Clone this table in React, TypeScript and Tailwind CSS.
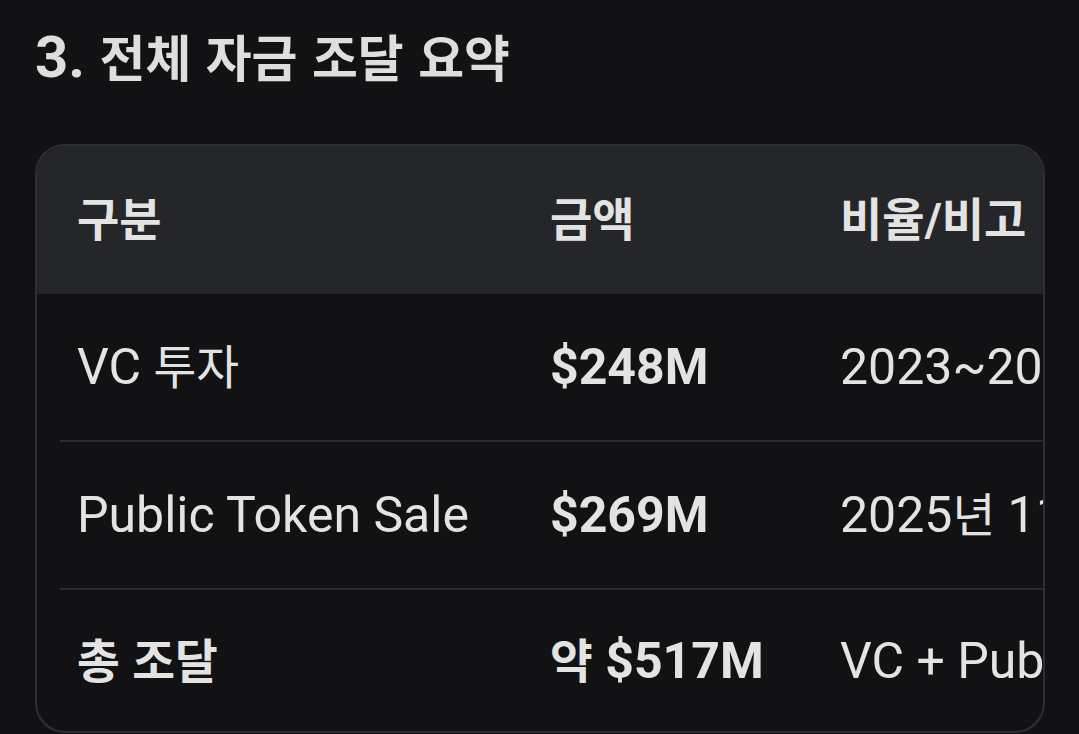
import React from "react";

const HANGUL = /([\uAC00-\uD7A3\u3131-\u318E]+)/;

function K({ t, k = "text-[0.93em]" }: { t: string; k?: string }) {
  const parts = t.split(HANGUL);
  return (
    <>
      {parts.map((p, i) =>
        HANGUL.test(p) ? (
          <span key={i} className={k}>
            {p}
          </span>
        ) : (
          <React.Fragment key={i}>{p}</React.Fragment>
        )
      )}
    </>
  );
}

const rows = [
  { a: "VC 투자", b: "$248M", c: "2023~2025년 라운드", h: "h-[146px]", first: true, boldA: false },
  { a: "Public Token Sale", b: "$269M", c: "2025년 11월 퍼블릭 세일", h: "h-[148px]", first: false, boldA: false },
  { a: "총 조달", b: "약 $517M", c: "VC + Public Token Sale", h: "h-[143px]", first: false, boldA: true },
];

export default function App() {
  return (
    <div className="min-h-[734px] w-full bg-[#121215] font-['Roboto','Noto_Sans_CJK_KR',sans-serif] text-[#e3e3e3]">
      <div className="pl-[35px] pt-[28px]">
        <div className="h-[58px] text-[58px] font-bold leading-none whitespace-nowrap text-[#dedede]">
          <K t="3. 전체 자금 조달 요약" k="text-[0.86em]" />
        </div>
      </div>
      <div className="ml-[35px] mt-[58px] w-[1010px] h-[589px] overflow-hidden rounded-[30px] border-2 border-[#2e2f33]">
        <div className="flex h-[148px] items-center bg-[#252629] text-[46px] font-bold whitespace-nowrap leading-none">
          <div className="w-[513px] shrink-0 pl-[40px]">
            <K t="구분" k="" />
          </div>
          <div className="w-[290px] shrink-0">
            <K t="금액" k="" />
          </div>
          <div className="shrink-0">
            <K t="비율/비고" k="" />
          </div>
        </div>
        {rows.map((r, i) => (
          <div
            key={i}
            className={`ml-[23px] flex items-center whitespace-nowrap text-[50px] leading-none ${r.h} ${
              r.first ? "" : "border-t-2 border-[#2a2b2f]"
            }`}
          >
            <div className={`w-[490px] shrink-0 pl-[17px] ${r.boldA ? "font-bold" : "font-normal"}`}>
              <K t={r.a} />
            </div>
            <div className="w-[290px] shrink-0 font-bold">
              <K t={r.b} />
            </div>
            <div className="shrink-0 font-normal">
              <K t={r.c} />
            </div>
          </div>
        ))}
      </div>
    </div>
  );
}
